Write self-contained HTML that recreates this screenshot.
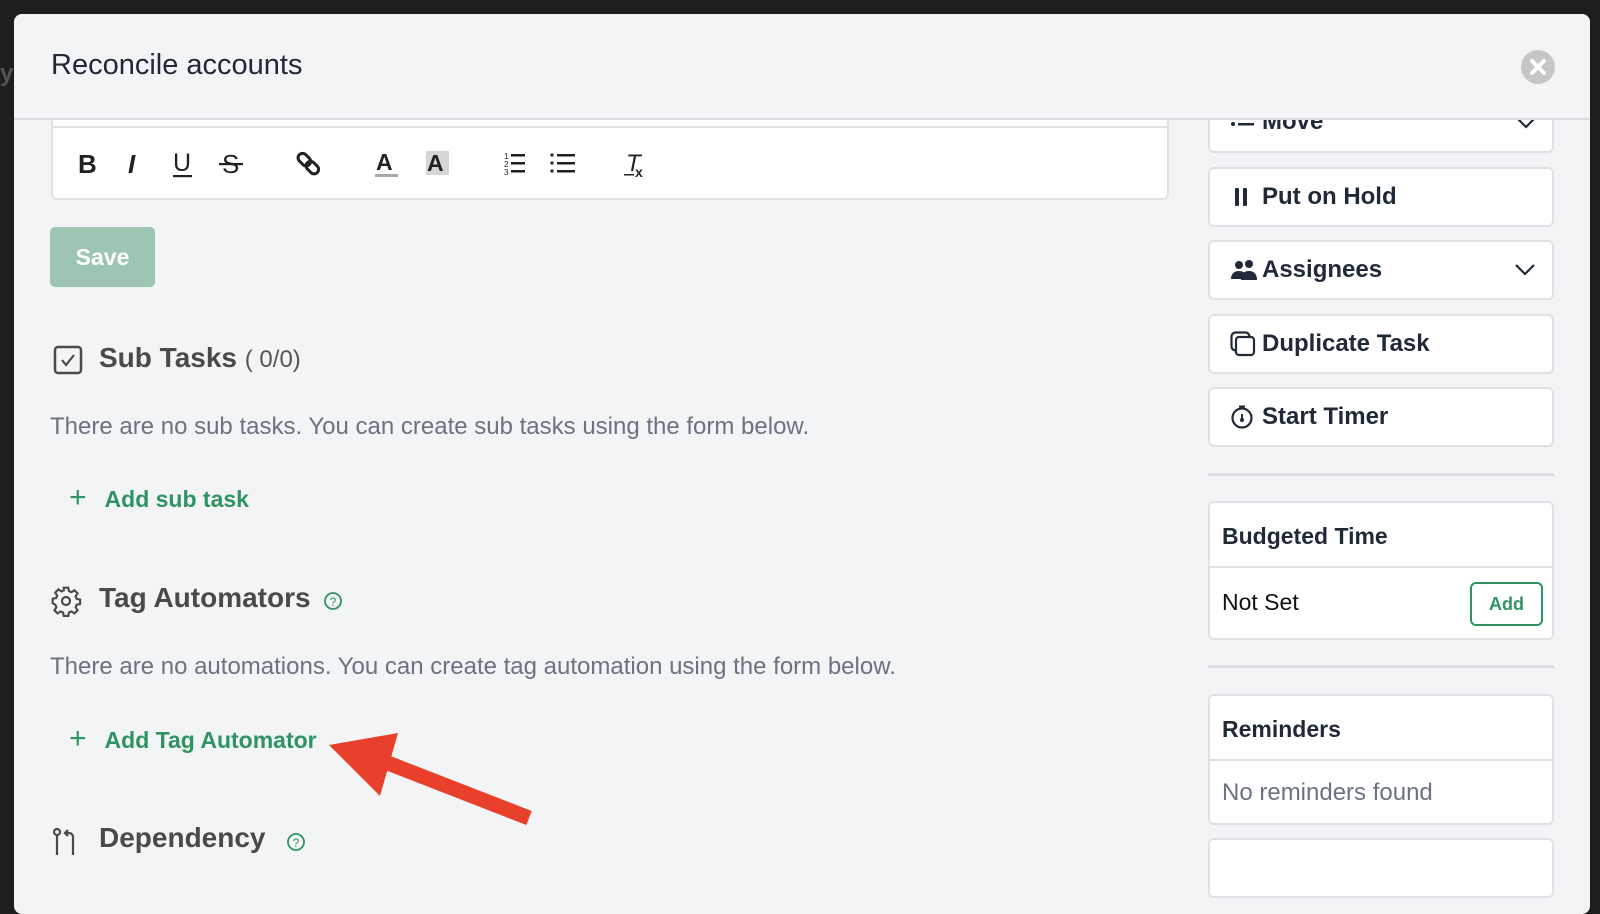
<!DOCTYPE html>
<html><head><meta charset="utf-8"><style>
*{margin:0;padding:0;box-sizing:border-box}
body{width:1600px;height:846px;background:#1e1e1e;position:relative;overflow:hidden;font-family:"Liberation Sans",Arial,sans-serif}
.a{position:absolute}
.modal{left:14px;top:14px;width:1576px;height:900px;background:#f3f4f6;border-radius:8px;overflow:hidden}
.hdr{left:0;top:0;width:1576px;height:106px;border-bottom:2px solid #dcdde0;background:#f3f4f6;z-index:2}
.card{background:#fff;border:2px solid #dfe1e4;border-radius:6px}
.btn{left:1194px;width:346px;height:60px;font-size:24px;font-weight:bold;color:#1f2937;display:flex;align-items:center}
.btn svg{position:absolute;left:20px}
.btn span{position:absolute;left:52px}
.sec{font-size:28px;font-weight:bold;color:#4a4a4a}
.txt{font-size:24px;color:#6b7280}
.add{font-size:23px;font-weight:bold;color:#2f9461}
</style></head><body>
<div class="a" style="left:0;top:60px;color:#555;font-size:24px;font-weight:bold">y</div>
<div class="a modal">
 <div class="a hdr">
  <div class="a" style="left:37px;top:35px;font-size:29px;color:#1f2937">Reconcile accounts</div>
  <div class="a" style="left:1507px;top:36px;width:34px;height:34px;border-radius:50%;background:#c5c6c8">
   <svg width="34" height="34" viewBox="0 0 34 34"><path d="M11 11L23 23M23 11L11 23" stroke="#fff" stroke-width="4" stroke-linecap="round"/></svg>
  </div>
 </div>
 <div class="a card" style="left:37px;top:100px;width:1118px;height:86px;border-radius:6px"></div>
 <div class="a" style="left:37px;top:112px;width:1118px;height:2px;background:#dfe1e4"></div>
 <svg class="a" style="left:50px;top:135px" width="600" height="30" viewBox="0 0 600 30" font-family="Liberation Sans" fill="#222">
  <text x="14" y="24" font-size="26" font-weight="bold">B</text>
  <text x="64" y="24" font-size="26" font-style="italic" font-weight="bold">I</text>
  <text x="109" y="22" font-size="25">U</text><rect x="109" y="26" width="19" height="2.2"/>
  <text x="158" y="24" font-size="26">S</text><rect x="155" y="14" width="24" height="2.2"/>
  <g stroke="#222" stroke-width="3" fill="none"><rect x="236" y="4" width="9" height="14" rx="4.5" transform="rotate(-45 240 11)"/><rect x="244" y="12" width="9" height="14" rx="4.5" transform="rotate(-45 248 19)"/></g>
  <text x="312" y="21" font-size="23" font-weight="bold">A</text><rect x="311" y="25" width="23" height="3" fill="#aaa"/>
  <rect x="362" y="2" width="23" height="24" fill="#bbb" opacity=".6"/><text x="363" y="22" font-size="23" font-weight="bold">A</text>
  <text x="440" y="10" font-size="8">1</text><text x="440" y="18" font-size="8">2</text><text x="440" y="26" font-size="8">3</text>
  <rect x="447" y="5" width="14" height="2.5"/><rect x="447" y="13" width="14" height="2.5"/><rect x="447" y="21" width="14" height="2.5"/>
  <circle cx="488" cy="6" r="1.6"/><circle cx="488" cy="14" r="1.6"/><circle cx="488" cy="22" r="1.6"/>
  <rect x="493" y="5" width="18" height="2.5"/><rect x="493" y="13" width="18" height="2.5"/><rect x="493" y="21" width="18" height="2.5"/>
  <text x="562" y="22" font-size="24" font-style="italic">T</text><rect x="560" y="25" width="10" height="1.5"/><text x="571" y="28" font-size="14" font-weight="bold">x</text>
 </svg>
 <div class="a" style="left:36px;top:213px;width:105px;height:60px;background:#9dc6b2;border-radius:5px;color:#fff;font-size:23px;font-weight:bold;text-align:center;line-height:60px">Save</div>

 <svg class="a" style="left:39px;top:331px" width="30" height="30" viewBox="0 0 30 30"><rect x="2" y="2" width="26" height="26" rx="3" fill="none" stroke="#4a4a4a" stroke-width="2.5"/><path d="M9 15l4 5 8-10" stroke="#4a4a4a" stroke-width="2.2" fill="none"/></svg>
 <div class="a sec" style="left:85px;top:328px">Sub Tasks <span style="font-weight:normal;font-size:24px;color:#555">( 0/0)</span></div>
 <div class="a txt" style="left:36px;top:399px">There are no sub tasks. You can create sub tasks using the form below.</div>
 <div class="a add" style="left:55px;top:472px"><span style="font-weight:normal;font-size:30px;margin-right:18px;line-height:20px">+</span>Add sub task</div>

 <svg class="a" style="left:36px;top:571px" width="32" height="32" viewBox="0 0 24 24" fill="none" stroke="#4a4a4a" stroke-width="1.6"><circle cx="12" cy="12" r="3"/><path d="M10.3 2h3.4l.5 2.6 1.9.8 2.2-1.5 2.4 2.4-1.5 2.2.8 1.9 2.6.5v3.4l-2.6.5-.8 1.9 1.5 2.2-2.4 2.4-2.2-1.5-1.9.8-.5 2.6h-3.4l-.5-2.6-1.9-.8-2.2 1.5-2.4-2.4 1.5-2.2-.8-1.9L2 13.7v-3.4l2.6-.5.8-1.9-1.5-2.2 2.4-2.4 2.2 1.5 1.9-.8z"/></svg>
 <div class="a sec" style="left:85px;top:568px">Tag Automators</div>
 <svg class="a" style="left:309px;top:577px" width="20" height="20" viewBox="0 0 20 20"><circle cx="10" cy="10" r="8" fill="none" stroke="#2f9461" stroke-width="1.8"/><text x="10" y="15" font-size="12" text-anchor="middle" fill="#2f9461" font-family="Liberation Sans">?</text></svg>
 <div class="a txt" style="left:36px;top:639px">There are no automations. You can create tag automation using the form below.</div>
 <div class="a add" style="left:55px;top:713px"><span style="font-weight:normal;font-size:30px;margin-right:18px;line-height:20px">+</span>Add Tag Automator</div>

 <svg class="a" style="left:36px;top:812px" width="30" height="30" viewBox="0 0 30 30" fill="none" stroke="#4a4a4a" stroke-width="2.2"><circle cx="7" cy="6" r="3"/><path d="M7 9v20M18 4l-3 3 3 3M15 7h4a4 4 0 0 1 4 4v18"/></svg>
 <div class="a sec" style="left:85px;top:808px">Dependency</div>
 <svg class="a" style="left:272px;top:818px" width="20" height="20" viewBox="0 0 20 20"><circle cx="10" cy="10" r="8" fill="none" stroke="#2f9461" stroke-width="1.8"/><text x="10" y="15" font-size="12" text-anchor="middle" fill="#2f9461" font-family="Liberation Sans">?</text></svg>

 <div class="a card btn" style="top:79px"><svg width="26" height="20" viewBox="0 0 26 20"><circle cx="3" cy="4" r="2" fill="#1f2937"/><circle cx="3" cy="11" r="2" fill="#1f2937"/><rect x="8" y="3" width="16" height="2.5" fill="#1f2937"/><rect x="8" y="10" width="16" height="2.5" fill="#1f2937"/></svg><span style="top:13px">Move</span><svg style="left:auto;right:16px" width="20" height="12" viewBox="0 0 20 12"><path d="M2 2l8 8 8-8" stroke="#1f2937" stroke-width="2.2" fill="none"/></svg></div>
 <div class="a card btn" style="top:153px"><svg width="22" height="22" viewBox="0 0 22 22"><rect x="5" y="2" width="4" height="18" rx="1" fill="#1f2937"/><rect x="13" y="2" width="4" height="18" rx="1" fill="#1f2937"/></svg><span>Put on Hold</span></div>
 <div class="a card btn" style="top:226px"><svg width="28" height="22" viewBox="0 0 28 22"><circle cx="9" cy="6" r="4" fill="#1f2937"/><circle cx="19" cy="5" r="4" fill="#1f2937"/><path d="M1 20c0-6 4-8 8-8s8 2 8 8z" fill="#1f2937"/><path d="M11 21c0-7 4-9 8-9s8 2 8 9z" fill="#1f2937"/></svg><span>Assignees</span><svg style="left:auto;right:16px" width="22" height="14" viewBox="0 0 22 14"><path d="M2 2l9 9 9-9" stroke="#1f2937" stroke-width="2.2" fill="none"/></svg></div>
 <div class="a card btn" style="top:300px"><svg width="26" height="26" viewBox="0 0 26 26"><rect x="1.5" y="1.5" width="18" height="18" rx="4" fill="none" stroke="#1f2937" stroke-width="2.2"/><rect x="6" y="6" width="18" height="18" rx="3" fill="#fff" stroke="#1f2937" stroke-width="2.2"/></svg><span>Duplicate Task</span></div>
 <div class="a card btn" style="top:373px"><svg width="24" height="24" viewBox="0 0 24 24"><circle cx="12" cy="13" r="9.5" fill="none" stroke="#1f2937" stroke-width="2.2"/><path d="M9 1.5h6M12 2v2M12 9v5" stroke="#1f2937" stroke-width="2"/><circle cx="12" cy="15" r="2" fill="#1f2937"/></svg><span>Start Timer</span></div>
 <div class="a" style="left:1194px;top:459px;width:346px;height:3px;background:#dcdde0"></div>
 <div class="a card" style="left:1194px;top:487px;width:346px;height:139px">
  <div class="a" style="left:12px;top:20px;font-size:23px;font-weight:bold;color:#1f2937">Budgeted Time</div>
  <div class="a" style="left:0;top:63px;width:342px;height:2px;background:#dfe1e4"></div>
  <div class="a" style="left:12px;top:86px;font-size:23px;color:#111">Not Set</div>
  <div class="a" style="left:260px;top:79px;width:73px;height:44px;border:2px solid #2f9461;border-radius:6px;color:#2f9461;font-size:18px;font-weight:bold;text-align:center;line-height:40px">Add</div>
 </div>
 <div class="a" style="left:1194px;top:651px;width:346px;height:3px;background:#dcdde0"></div>
 <div class="a card" style="left:1194px;top:680px;width:346px;height:131px">
  <div class="a" style="left:12px;top:20px;font-size:23px;font-weight:bold;color:#1f2937">Reminders</div>
  <div class="a" style="left:0;top:63px;width:342px;height:2px;background:#dfe1e4"></div>
  <div class="a" style="left:12px;top:83px;font-size:24px;color:#6b7280">No reminders found</div>
 </div>
 <div class="a card" style="left:1194px;top:824px;width:346px;height:60px"></div>
</div>
<svg class="a" style="left:0;top:0" width="1600" height="846"><path d="M329 745L398 733L380 796Z" fill="#e8402a"/><path d="M380 760L529 818" stroke="#e8402a" stroke-width="15"/></svg>
</body></html>
